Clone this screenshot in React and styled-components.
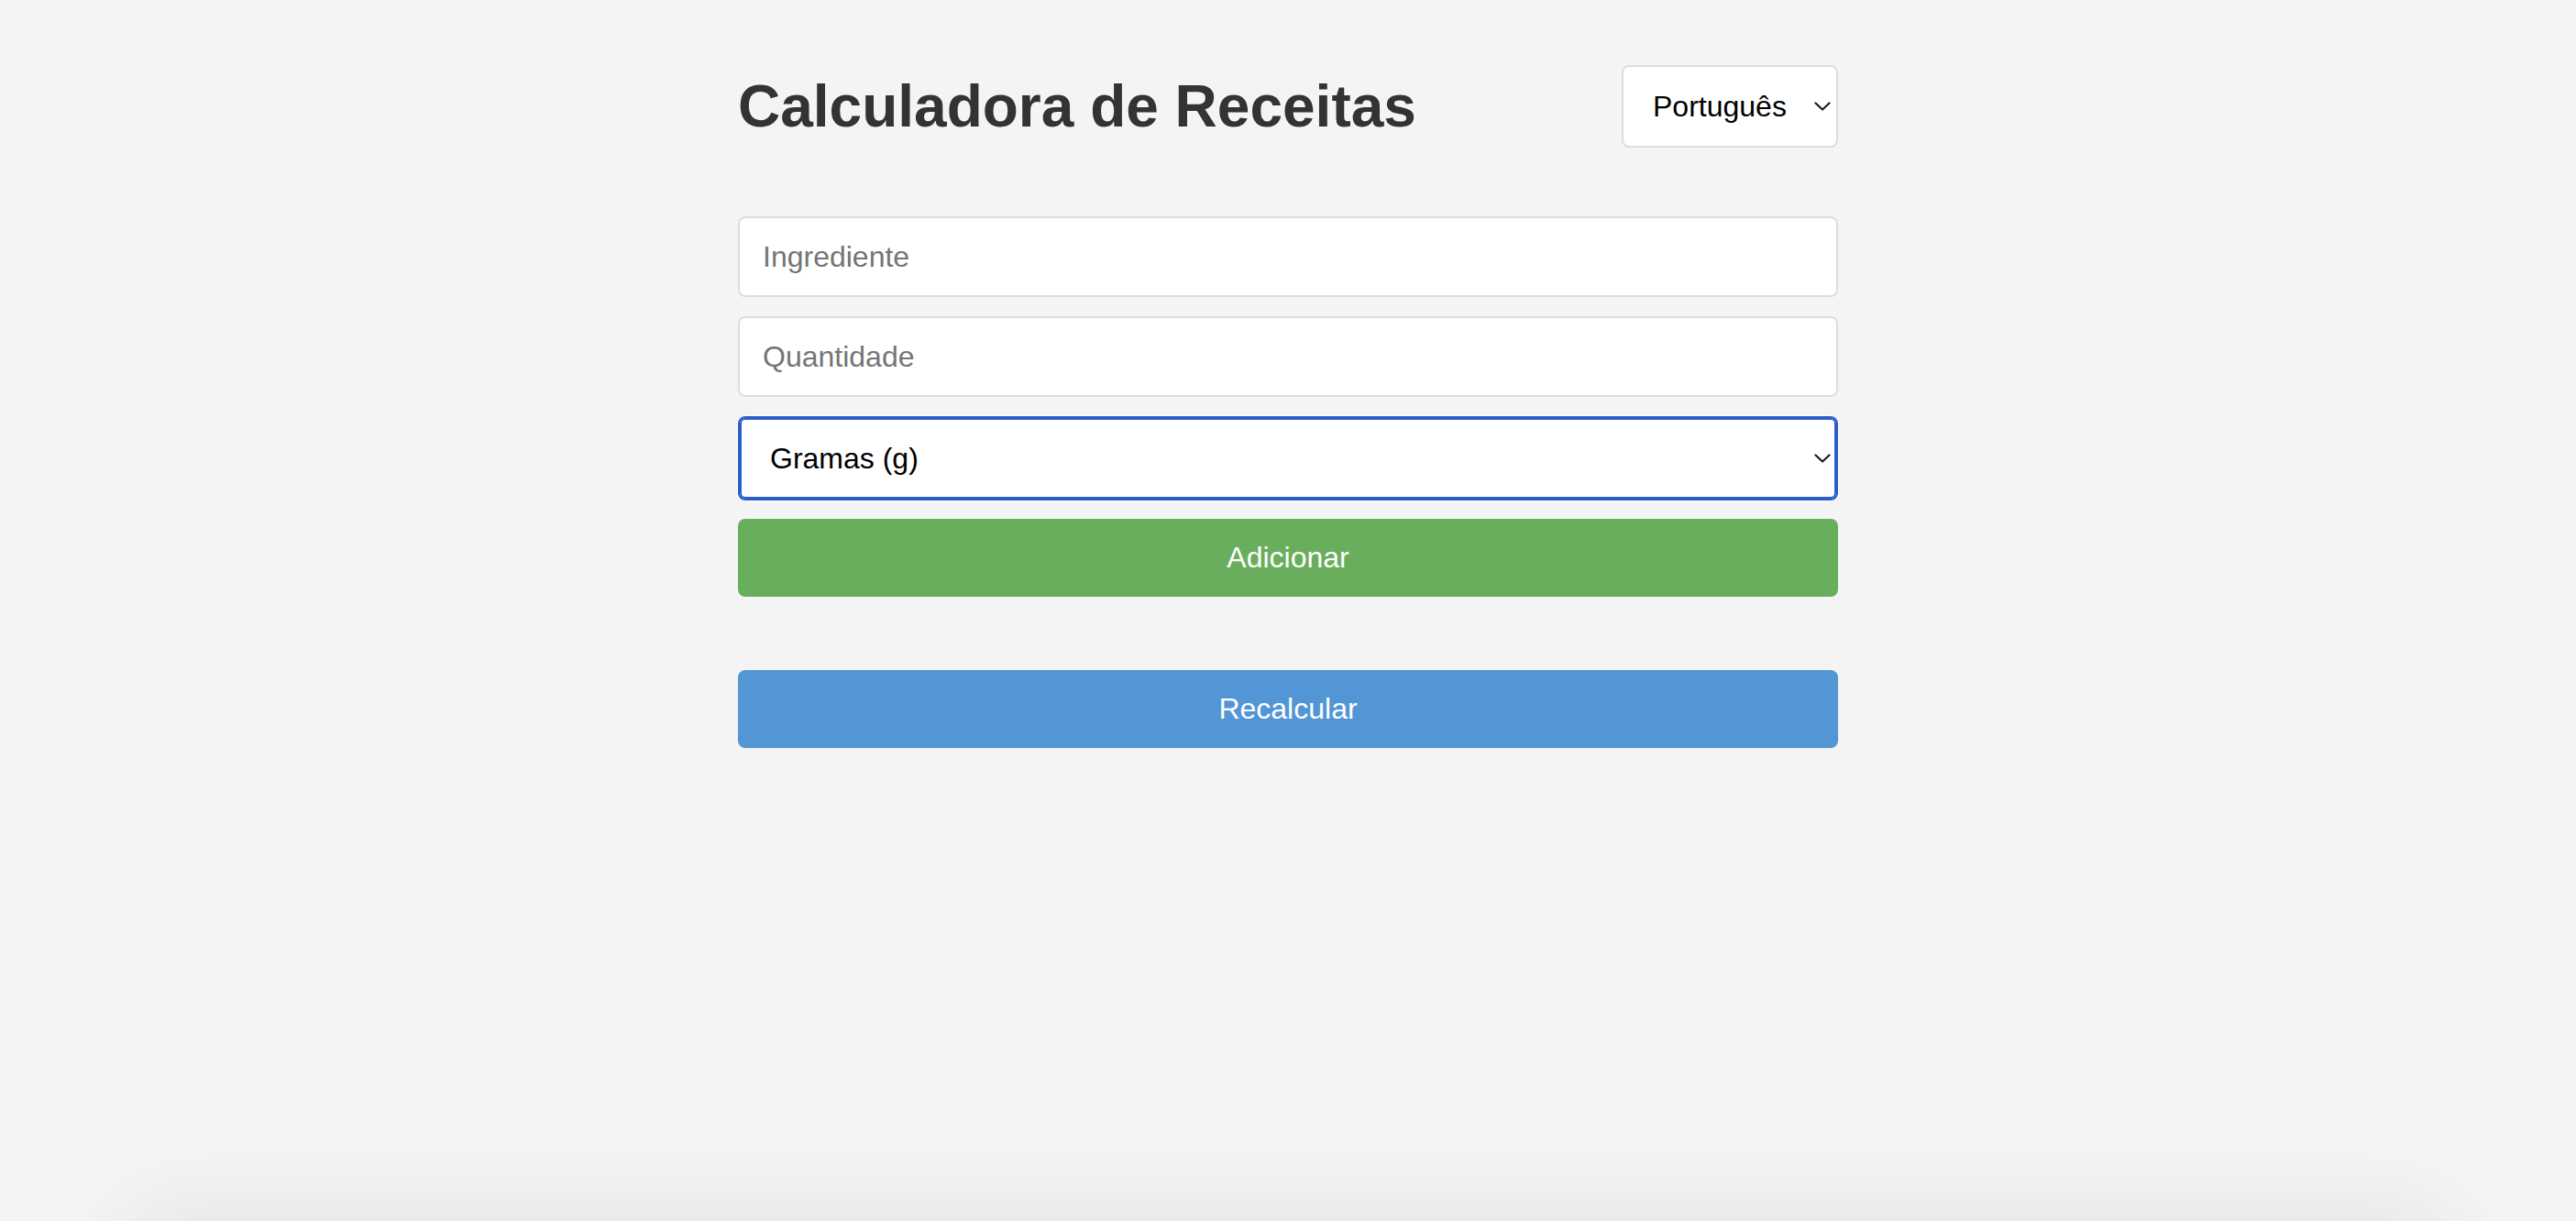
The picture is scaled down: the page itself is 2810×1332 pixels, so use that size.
import React from 'react'
import styled, { createGlobalStyle } from 'styled-components'

const GlobalStyle = createGlobalStyle`
  * {
    box-sizing: border-box;
  }
  body {
    margin: 0;
    background-color: #f4f4f4;
    font-family: "Liberation Sans", Arial, sans-serif;
    min-height: 100vh;
  }
`

const Page = styled.div`
  min-height: 100vh;
`

const Container = styled.div`
  width: 1200px;
  margin: 0 auto;
  padding-top: 71px;
`

const Header = styled.div`
  display: flex;
  justify-content: space-between;
  align-items: center;
  height: 90px;
`

const Title = styled.h1`
  margin: 0;
  font-size: 64px;
  font-weight: 700;
  color: #333333;
`

const SelectWrap = styled.div`
  position: relative;
  width: ${({width}) => width ? `${width}px` : '100%'};
  margin-top: ${({top}) => top || 0}px;
`

const Select = styled.select`
  appearance: none;
  -webkit-appearance: none;
  display: block;
  width: 100%;
  height: ${({height}) => height}px;
  padding: 0 36px 0 ${({padLeft}) => padLeft}px;
  background-color: #ffffff;
  color: #000000;
  font-family: "Liberation Sans", Arial, sans-serif;
  font-size: 32px;
  border: 2px solid ${({focused}) => focused ? '#2a5fc8' : '#dddddd'};
  border-radius: 8px;
  box-shadow: ${({focused}) => focused ? 'inset 0 0 0 2px #2a5fc8, 0 0 0 1px #ffffff' : 'none'};
  outline: none;
`

const Chevron = styled.svg`
  position: absolute;
  right: 8px;
  top: 50%;
  transform: translateY(-50%);
  pointer-events: none;
`

const Input = styled.input`
  display: block;
  width: 100%;
  height: 88px;
  margin-top: ${({top}) => top}px;
  padding: 0 25px;
  background-color: #ffffff;
  border: 2px solid #dddddd;
  border-radius: 8px;
  font-family: "Liberation Sans", Arial, sans-serif;
  font-size: 32px;
  color: #000000;
  outline: none;

  &::placeholder {
    color: #757575;
  }
`

const Button = styled.button`
  display: block;
  width: 100%;
  height: 85px;
  margin-top: ${({top}) => top}px;
  border: none;
  border-radius: 8px;
  background-color: ${({bg}) => bg};
  color: #ffffff;
  font-family: "Liberation Sans", Arial, sans-serif;
  font-size: 32px;
  cursor: pointer;
`

const BottomShade = styled.div`
  position: fixed;
  left: 140px;
  right: 140px;
  bottom: -120px;
  height: 120px;
  border-radius: 80px;
  box-shadow: 0 0 90px 20px rgba(0, 0, 0, 0.06);
  pointer-events: none;
`

const Arrow = () => (
  <Chevron width="18" height="10" viewBox="0 0 18 10">
    <path d="M1.5 1.5 L9 8.5 L16.5 1.5" fill="none" stroke="#1c1c1c" strokeWidth="2.2" strokeLinecap="round" strokeLinejoin="round" />
  </Chevron>
)

function App () {
  const [lang, setLang] = React.useState('pt')
  const [unit, setUnit] = React.useState('g')
  return (
    <Page>
      <GlobalStyle />
      <Container>
        <Header>
          <Title>Calculadora de Receitas</Title>
          <SelectWrap width={236}>
            <Select height={90} padLeft={32} value={lang} onChange={e => setLang(e.target.value)}>
              <option value="pt">Português</option>
              <option value="en">English</option>
              <option value="es">Español</option>
            </Select>
            <Arrow />
          </SelectWrap>
        </Header>
        <Input top={75} placeholder="Ingrediente" />
        <Input top={21} placeholder="Quantidade" />
        <SelectWrap top={21}>
          <Select focused height={92} padLeft={33} value={unit} onChange={e => setUnit(e.target.value)}>
            <option value="g">Gramas (g)</option>
            <option value="kg">Quilogramas (kg)</option>
            <option value="ml">Mililitros (ml)</option>
            <option value="l">Litros (l)</option>
            <option value="un">Unidades</option>
          </Select>
          <Arrow />
        </SelectWrap>
        <Button top={20} bg="#69ae5c">Adicionar</Button>
        <Button top={80} bg="#5396d5">Recalcular</Button>
      </Container>
      <BottomShade />
    </Page>
  )
}

export default App
